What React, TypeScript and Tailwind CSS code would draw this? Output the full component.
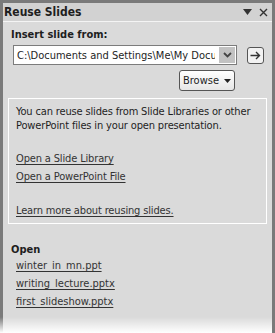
import React from "react";

export default function App() {
  return (
    <div
      className="relative w-[275px] h-[333px] overflow-hidden bg-[#7a7a7a] pt-[3px] pl-[3px] pr-[3px] flex flex-col text-[#1e1e1e]"
      style={{ fontFamily: "'DejaVu Sans Condensed', 'Liberation Sans', Arial, sans-serif" }}
    >
      {/* title bar */}
      <div className="h-[19px] bg-[#d2d2d2] flex items-center justify-between pl-[1px] pr-[4px] border-b border-[#f4f4f4]">
        <span className="text-[12px] font-bold leading-none">Reuse Slides</span>
        <div className="flex items-center gap-[7px]">
          <svg width="9" height="6" viewBox="0 0 9 6"><path d="M0 0H9L4.5 6Z" fill="#333" /></svg>
          <svg width="9" height="9" viewBox="0 0 9 9"><path d="M1 1L8 8M8 1L1 8" stroke="#333" strokeWidth="1.4" /></svg>
        </div>
      </div>
      {/* body */}
      <div className="flex-1 bg-[#dadada] flex flex-col">
        <div className="pl-[8px] pt-[5px] text-[11px] font-bold leading-[15px]">Insert slide from:</div>
        <div className="flex items-center pl-[10px] pt-[3px]">
          <div className="w-[224px] h-[20px] bg-white border border-[#7c7c7c] flex items-center justify-between pl-[3px] pr-[1px]">
            <span className="text-[11px] leading-none whitespace-nowrap overflow-hidden w-[198px]">C:\Documents and Settings\Me\My Documents</span>
            <div className="w-[16px] h-[16px] bg-[#c2c2c2] flex items-center justify-center">
              <svg width="9" height="6" viewBox="0 0 9 6"><path d="M1 1L4.5 4.5L8 1" stroke="#444" strokeWidth="1.8" fill="none" /></svg>
            </div>
          </div>
          <div className="ml-[10px] w-[17px] h-[17px] rounded-[3px] border border-[#555] bg-[#f2f2f2] flex items-center justify-center">
            <svg width="11" height="9" viewBox="0 0 11 9"><path d="M0.5 4.5H9.5M6 1L9.5 4.5L6 8" stroke="#333" strokeWidth="1.4" fill="none" /></svg>
          </div>
        </div>
        <div className="flex justify-end pr-[37px] pt-[5px]">
          <div className="w-[56px] h-[21px] rounded-[3px] border border-[#555] bg-gradient-to-b from-white to-[#e6e6e6] flex items-center justify-center gap-[5px]">
            <span className="text-[11px] leading-none">Browse</span>
            <svg width="7" height="4" viewBox="0 0 7 4"><path d="M0 0H7L3.5 4Z" fill="#222" /></svg>
          </div>
        </div>
        <div className="mx-[5px] mt-[7px] h-[126px] border border-white pl-[7px] pt-[6px] text-[11px] tracking-[-0.15px]">
          <p className="leading-[14px]">You can reuse slides from Slide Libraries or other PowerPoint files in your open presentation.</p>
          <p className="mt-[17px] leading-[18px] underline underline-offset-2 text-[#333]">Open a Slide Library</p>
          <p className="leading-[18px] underline underline-offset-2 text-[#333]">Open a PowerPoint File</p>
          <p className="mt-[16px] leading-[18px] underline underline-offset-2 text-[#333]">Learn more about reusing slides.</p>
        </div>
        <div className="pl-[8px] pt-[18px] text-[11px] font-bold leading-[15px]">Open</div>
        <div className="pl-[13px] text-[11px] text-[#333]">
          <p className="leading-[18px] underline underline-offset-2">winter_in_mn.ppt</p>
          <p className="leading-[18px] underline underline-offset-2">writing_lecture.pptx</p>
          <p className="leading-[18px] underline underline-offset-2">first_slideshow.pptx</p>
        </div>
      </div>
      <div className="absolute left-0 right-[3px] bottom-0 h-[16px] bg-gradient-to-b from-transparent to-white" />
    </div>
  );
}
